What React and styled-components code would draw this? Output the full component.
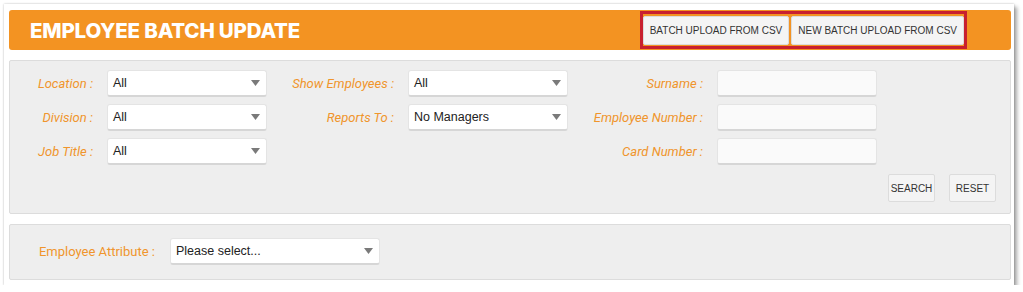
import React from 'react';
import styled, { createGlobalStyle } from 'styled-components';

const GlobalStyle = createGlobalStyle`
  body {
    margin: 0;
    background: #fff;
    font-family: Roboto, "Liberation Sans", Arial, sans-serif;
  }
`;

const Card = styled.div`
  box-sizing: border-box;
  margin: 4px 0 0 4px;
  width: 1010px;
  height: 281px;
  padding: 6px 3px 0 5px;
  background: #fff;
  box-shadow: 0 0 2px rgba(0, 0, 0, 0.25), 3px 3px 4px rgba(0, 0, 0, 0.35);
`;

const Header = styled.header`
  display: flex;
  align-items: center;
  height: 40px;
  padding: 0 44px 0 21px;
  background: #f39322;
  border-radius: 3px;
`;

const Title = styled.h1`
  margin: 0;
  color: #fff;
  font-family: Inter, "Open Sans", sans-serif;
  font-weight: 800;
  font-size: 20.5px;
  letter-spacing: -0.2px;
`;

const Highlight = styled.div`
  display: flex;
  gap: 2px;
  margin-left: auto;
  height: 38px;
  box-sizing: border-box;
  padding: 1px 0 0 0;
  align-items: center;
  border: 3px solid #c8202f;
`;

const HeaderButton = styled.button`
  height: 29px;
  padding: 0 6px;
  background: #f4f4f4;
  border: 1px solid #dcdcdc;
  border-radius: 2px;
  color: #333;
  font-family: "Liberation Sans", Arial, sans-serif;
  font-size: 10px;
  text-transform: uppercase;
`;

const Panel = styled.section`
  box-sizing: border-box;
  margin-top: ${(p) => p.$top}px;
  padding: ${(p) => p.$pad};
  background: #eeeeee;
  border: 1px solid #dcdcdc;
  border-radius: 2px;
`;

const Grid = styled.div`
  display: grid;
  grid-template-columns: 97px 160px 141px 160px 149px 160px;
  grid-auto-rows: 27px;
  row-gap: 7px;
`;

const Label = styled.label`
  display: flex;
  align-items: center;
  justify-content: flex-end;
  box-sizing: border-box;
  width: ${(p) => (p.$w ? `${p.$w}px` : 'auto')};
  height: 27px;
  padding-right: ${(p) => p.$right || 14}px;
  color: #f0952c;
  font-size: 13px;
  font-style: ${(p) => (p.$plain ? 'normal' : 'italic')};
  white-space: nowrap;
`;

const Field = styled.div`
  box-sizing: border-box;
  display: flex;
  align-items: center;
  justify-content: space-between;
  width: ${(p) => p.$w || 160}px;
  height: 27px;
  padding: 0 6px 0 5px;
  background: ${(p) => (p.$text ? '#fafafa' : '#fff')};
  border: 1px solid #e4e4e4;
  border-bottom: 2px solid #d6d6d6;
  border-radius: 3px;
  color: #222;
  font-family: "Liberation Sans", Arial, sans-serif;
  font-size: 12.5px;
`;

const Empty = styled.div``;

const Actions = styled.div`
  display: flex;
  justify-content: flex-end;
  gap: 14px;
  margin-top: 9px;
`;

const SmallButton = styled.button`
  width: 47px;
  height: 28px;
  padding: 0;
  background: #f4f4f4;
  border: 1px solid #dcdcdc;
  border-radius: 2px;
  color: #333;
  font-family: "Liberation Sans", Arial, sans-serif;
  font-size: 10px;
`;

const Row = styled.div`
  display: flex;
  align-items: center;
`;

const Arrow = () => (
  <svg width="9" height="6" viewBox="0 0 9 6">
    <path d="M0 0h9L4.5 6z" fill="#7a7a7a" />
  </svg>
);

function Select({ value, w }) {
  return (
    <Field $w={w}>
      <span>{value}</span>
      <Arrow />
    </Field>
  );
}

export default function App() {
  return (
    <>
      <GlobalStyle />
      <Card>
        <Header>
          <Title>EMPLOYEE BATCH UPDATE</Title>
          <Highlight>
            <HeaderButton>Batch Upload From CSV</HeaderButton>
            <HeaderButton>New Batch Upload From CSV</HeaderButton>
          </Highlight>
        </Header>

        <Panel $top={10} $pad="9px 14px 11px 0">
          <Grid>
            <Label>Location :</Label>
            <Select value="All" />
            <Label>Show Employees :</Label>
            <Select value="All" />
            <Label>Surname :</Label>
            <Field $text />

            <Label>Division :</Label>
            <Select value="All" />
            <Label>Reports To :</Label>
            <Select value="No Managers" />
            <Label>Employee Number :</Label>
            <Field $text />

            <Label>Job Title :</Label>
            <Select value="All" />
            <Empty />
            <Empty />
            <Label>Card Number :</Label>
            <Field $text />
          </Grid>
          <Actions>
            <SmallButton>SEARCH</SmallButton>
            <SmallButton>RESET</SmallButton>
          </Actions>
        </Panel>

        <Panel $top={10} $pad="13px 0 14px 0">
          <Row>
            <Label $plain $right={15} $w={160}>
              Employee Attribute :
            </Label>
            <Select value="Please select..." w={210} />
          </Row>
        </Panel>
      </Card>
    </>
  );
}
